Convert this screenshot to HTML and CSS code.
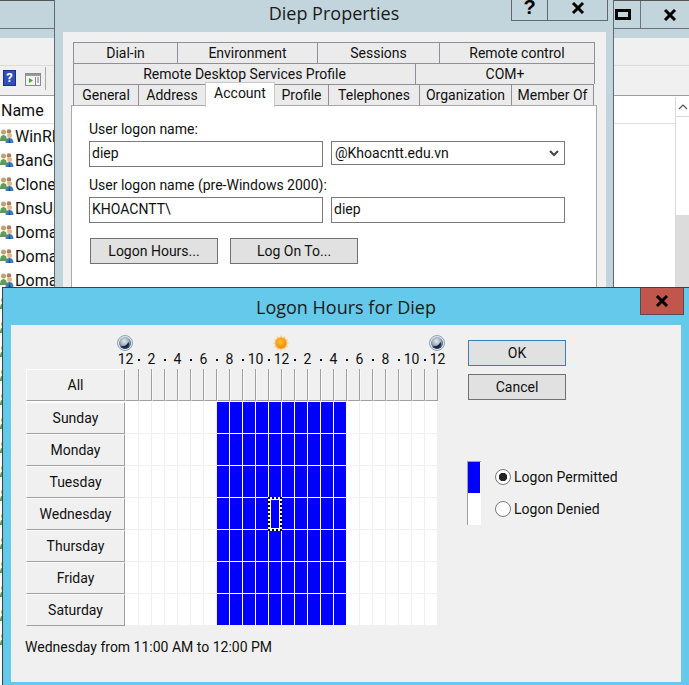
FILE: index.html
```html
<!DOCTYPE html>
<html lang="en">
<head>
    <meta charset="UTF-8">
    <title>Logon Hours for Diep</title>
    <link rel="stylesheet" href="styles.css">
</head>
<body>
    <svg class="defs" width="0" height="0">
        <defs>
            <radialGradient id="moonFill" cx="45%" cy="35%" r="70%">
                <stop offset="0" stop-color="#e8ecf0"/>
                <stop offset="0.55" stop-color="#9aa6b4"/>
                <stop offset="1" stop-color="#1f3350"/>
            </radialGradient>
            <radialGradient id="sunFill" cx="45%" cy="40%" r="60%">
                <stop offset="0" stop-color="#ffc233"/>
                <stop offset="1" stop-color="#f08a00"/>
            </radialGradient>
            <symbol id="moon" viewBox="0 0 16 16">
                <circle cx="8" cy="8" r="7.5" fill="#dfe6ee" stroke="#8fa3bd"/>
                <circle cx="8" cy="8" r="6" fill="url(#moonFill)"/>
                <path d="M3.5 11c3 1 6 0 8-4 1.500 3-.5 6.500-3.500 6.500-2 0-3.500-1-4.500-2.500z" fill="#13294a"/>
            </symbol>
            <symbol id="sun" viewBox="0 0 16 16">
                <path d="M8 0l1.500 2.500L12 1l.5 2.800L15 4.500l-1 2.500L16 8l-2 1.500 1 2.500-2.500.7L12 15l-2.500-1.300L8 16l-1.500-2.300L4 15l-.5-2.300L1 12l1-2.500L0 8l2-1 -1-2.500 2.500-.7L4 1l2.500 1.500z" fill="#f8cf90"/>
                <circle cx="8" cy="8" r="5.500" fill="url(#sunFill)"/>
            </symbol>
            <symbol id="group" viewBox="0 0 14 16">
                <circle cx="3.500" cy="4" r="2.500" fill="#c9a06a"/>
                <path d="M0 13c0-4 1-6 3.500-6S7 9 7 13z" fill="#5f9c55"/>
                <circle cx="9" cy="3.500" r="2.300" fill="#a9805a"/>
                <circle cx="9.500" cy="7.500" r="2.500" fill="#e0b98a"/>
                <path d="M5.500 15c0-3.500 1.500-5 4-5s4 1.500 4 5z" fill="#3f7fc0"/>
                <path d="M8.500 15l1-5 1 5z" fill="#1f4a80"/>
            </symbol>
            <symbol id="closeX" viewBox="0 0 14 12">
                <path d="M2 1l10 10M12 1L2 11" fill="none" stroke="#000" stroke-width="3"/>
            </symbol>
        </defs>
    </svg>

    <!-- window behind everything -->
    <div class="win back">
        <div class="back-caption">
            <div class="back-btns">
                <span class="restore-btn"><i class="restore-ico"></i></span>
                <span class="back-close"><svg class="x-ico"><use href="#closeX"/></svg></span>
            </div>
        </div>
        <div class="menu-row"></div>
        <div class="tool-row">
            <span class="help-ico">?</span>
            <svg class="view-ico" viewBox="0 0 16 13">
                <rect x="0.500" y="0.500" width="15" height="12" fill="#f4f4f4" stroke="#8a8a8a"/>
                <rect x="1" y="1" width="14" height="2" fill="#9a9a9a"/>
                <path d="M4 5l4 2.500L4 10z" fill="#3faa3a"/>
                <path d="M10.500 4v8" stroke="#8a8a8a"/>
                <path d="M12 5h2M12 7h2M12 9h2" stroke="#6a7a90"/>
            </svg>
            <span class="tool-sep"></span>
        </div>
        <div class="list-head">Name</div>
        <ul class="list" id="list">
            <li><svg class="group-ico"><use href="#group"/></svg>WinRMRemoteWMIUsers__</li>
            <li><svg class="group-ico"><use href="#group"/></svg>BanGiamHieu</li>
            <li><svg class="group-ico"><use href="#group"/></svg>Cloneable Domain Controllers</li>
            <li><svg class="group-ico"><use href="#group"/></svg>DnsUpdateProxy</li>
            <li><svg class="group-ico"><use href="#group"/></svg>Domain Admins</li>
            <li><svg class="group-ico"><use href="#group"/></svg>Domain Computers</li>
            <li><svg class="group-ico"><use href="#group"/></svg>Domain Controllers</li>
        </ul>
        <div class="scrollbar">
            <span class="scroll-up"><svg viewBox="0 0 10 6"><path d="M1 5l4-4 4 4" fill="none" stroke="#555" stroke-width="1.200"/></svg></span>
            <span class="scroll-track"></span>
            <span class="scroll-thumb"></span>
        </div>
    </div>

    <!-- properties dialog -->
    <div class="win props">
        <div class="props-title">Diep Properties</div>
        <div class="props-btns">
            <span class="props-help">?</span>
            <span class="props-close"><svg class="x-ico"><use href="#closeX"/></svg></span>
        </div>
        <div class="props-body">
            <div class="tabs">
                <div class="tab-row">
                    <span class="tab w104">Dial-in</span>
                    <span class="tab w140">Environment</span>
                    <span class="tab w122">Sessions</span>
                    <span class="tab w156">Remote control</span>
                </div>
                <div class="tab-row">
                    <span class="tab w342">Remote Desktop Services Profile</span>
                    <span class="tab w180">COM+</span>
                </div>
                <div class="tab-row">
                    <span class="tab w66">General</span>
                    <span class="tab w67">Address</span>
                    <span class="tab w69 active">Account</span>
                    <span class="tab w54">Profile</span>
                    <span class="tab w91">Telephones</span>
                    <span class="tab w92">Organization</span>
                    <span class="tab w83">Member Of</span>
                </div>
            </div>
            <div class="panel">
                <label class="f-label">User logon name:</label>
                <div class="f-row">
                    <input class="f-input" value="diep">
                    <div class="f-select">@Khoacntt.edu.vn
                        <svg class="chev" viewBox="0 0 10 7"><path d="M1 1l4 4 4-4" fill="none" stroke="#444" stroke-width="2"/></svg>
                    </div>
                </div>
                <label class="f-label second">User logon name (pre-Windows 2000):</label>
                <div class="f-row">
                    <input class="f-input" value="KHOACNTT\">
                    <input class="f-input" value="diep">
                </div>
                <div class="f-buttons">
                    <button class="btn w128">Logon Hours...</button>
                    <button class="btn w128">Log On To...</button>
                </div>
            </div>
        </div>
    </div>

    <!-- logon hours dialog -->
    <div class="win hours">
        <div class="hours-title">Logon Hours for Diep</div>
        <span class="hours-close"><svg class="x-ico"><use href="#closeX"/></svg></span>
        <div class="hours-body">
            <div class="sched">
                <div class="sky">
                    <svg class="sky-ico moon1"><use href="#moon"/></svg>
                    <svg class="sky-ico sun1"><use href="#sun"/></svg>
                    <svg class="sky-ico moon2"><use href="#moon"/></svg>
                </div>
                <div class="ruler" id="ruler"></div>
                <div class="all-row" id="allRow">
                    <span class="day-head">All</span>
                </div>
                <div class="days" id="days">
                    <div class="day-row"><span class="day-head">Sunday</span></div>
                    <div class="day-row"><span class="day-head">Monday</span></div>
                    <div class="day-row"><span class="day-head">Tuesday</span></div>
                    <div class="day-row"><span class="day-head">Wednesday</span></div>
                    <div class="day-row"><span class="day-head">Thursday</span></div>
                    <div class="day-row"><span class="day-head">Friday</span></div>
                    <div class="day-row"><span class="day-head">Saturday</span></div>
                </div>
                <div class="status">Wednesday from 11:00 AM to 12:00 PM</div>
            </div>
            <div class="side">
                <button class="btn side-btn default">OK</button>
                <button class="btn side-btn">Cancel</button>
                <div class="legend">
                    <div class="legend-bar"><i></i></div>
                    <div class="legend-opts">
                        <label class="opt"><input type="radio" name="logon" checked>Logon Permitted</label>
                        <label class="opt"><input type="radio" name="logon">Logon Denied</label>
                    </div>
                </div>
            </div>
        </div>
    </div>

    <script src="script.js"></script>
</body>
</html>
```

FILE: styles.css
```css
*{
    margin: 0;
    padding: 0;
    box-sizing: border-box;
}
html, body{
    width: 689px;
    height: 685px;
    overflow: hidden;
}
body{
    position: relative;
    background: #fff;
    font-family: Roboto, "Liberation Sans", sans-serif;
    font-size: 14px;
    color: #111;
}
ul{
    list-style: none;
}
.defs{
    position: absolute;
}
.win{
    position: absolute;
}
.x-ico{
    width: 14px;
    height: 12px;
}

/* back window */
.back{
    left: 0;
    top: 0;
    width: 689px;
    height: 685px;
    background: #fff;
}
.back-caption{
    height: 38px;
    background: #c2d5dc;
    border-top: 1px solid #555;
}
.back-btns{
    display: flex;
    justify-content: flex-end;
    height: 28px;
    border-bottom: 1px solid #6b7378;
}
.restore-btn{
    width: 26px;
    display: flex;
    align-items: center;
    padding-left: 1px;
}
.restore-ico{
    width: 16px;
    height: 11px;
    border: 3px solid #000;
}
.back-close{
    width: 49px;
    display: flex;
    align-items: center;
    justify-content: center;
    padding-left: 9px;
    border-left: 1px solid #6b7378;
}
.menu-row{
    height: 28px;
    background: #f0f0f0;
    border-bottom: 1px solid #dcdcdc;
}
.tool-row{
    height: 30px;
    background: #f0f0f0;
    border-bottom: 1px solid #a0a0a0;
    display: flex;
    align-items: flex-start;
    padding: 4px 0 0 3px;
}
.help-ico{
    width: 13px;
    height: 16px;
    background: #2f50b8;
    border: 1px solid #1d2f80;
    color: #fff;
    font-weight: bold;
    font-size: 13px;
    line-height: 14px;
    text-align: center;
}
.view-ico{
    width: 16px;
    height: 13px;
    margin-left: 9px;
    margin-top: 3px;
}
.tool-sep{
    width: 1px;
    height: 23px;
    margin-left: 4px;
    margin-top: -3px;
    background: #a8a8a8;
}
.list-head{
    height: 28px;
    padding-left: 1px;
    font-size: 16px;
    line-height: 30px;
    background: #fff;
    border-bottom: 1px solid #e2e2e2;
}
.list{
    width: 54px;
    overflow: hidden;
}
.list li{
    height: 24px;
    display: flex;
    align-items: center;
    font-size: 16px;
    white-space: nowrap;
}
.group-ico{
    width: 14px;
    height: 16px;
    margin-right: 1px;
    flex: none;
}
.scrollbar{
    position: absolute;
    left: 675px;
    top: 97px;
    width: 14px;
    height: 190px;
    display: flex;
    flex-direction: column;
    border-left: 1px solid #d9d9d9;
    background: #fff;
}
.scroll-up{
    height: 20px;
    display: flex;
    align-items: center;
    justify-content: center;
    border-bottom: 1px solid #d9d9d9;
}
.scroll-up svg{
    width: 10px;
    height: 6px;
}
.scroll-track{
    height: 98px;
}
.scroll-thumb{
    flex: 1;
    background: #dcdcdc;
}

/* properties dialog */
.props{
    left: 54px;
    top: 0;
    width: 560px;
    height: 288px;
    background: #c2d5dc;
    border-left: 1px solid #5f6a70;
    border-right: 1px solid #5f6a70;
}
.props-title{
    height: 32px;
    text-align: center;
    font-family: "Open Sans", "Noto Sans", sans-serif;
    font-size: 18px;
    line-height: 27px;
    color: #1a1a1a;
}
.props-btns{
    position: absolute;
    top: -1px;
    left: 456px;
    display: flex;
    height: 22px;
    border: 1px solid #5f6a70;
    border-top: 0;
}
.props-help, .props-close{
    display: flex;
    align-items: center;
    justify-content: center;
}
.props-help{
    width: 36px;
    padding-bottom: 4px;
    border-right: 1px solid #5f6a70;
    font-family: "Liberation Sans", sans-serif;
    font-weight: bold;
    font-size: 20px;
    color: #000;
}
.props-close{
    width: 59px;
    padding-bottom: 3px;
}
.props-body{
    margin: 0 7px 0 8px;
    height: 256px;
    background: #f0f0f0;
    padding: 10px 8px 0;
}
.tabs{
    margin-left: 2px;
}
.tab-row{
    display: flex;
    height: 21px;
}
.tab{
    height: 21px;
    background: #ebebeb;
    border: 1px solid #8f8f98;
    border-width: 1px 1px 0 1px;
    margin-right: -1px;
    text-align: center;
    line-height: 21px;
    color: #111;
}
.tab.active{
    position: relative;
    z-index: 1;
    height: 25px;
    margin-top: -2px;
    background: #fff;
    line-height: 21px;
    border-color: #c8c8c8;
}
.w66{ width: 66px; }
.w67{ width: 68px; }
.w69{ width: 70px; }
.w54{ width: 55px; }
.w91{ width: 92px; }
.w92{ width: 93px; }
.w83{ width: 83px; }
.w104{ width: 105px; }
.w122{ width: 123px; }
.w140{ width: 141px; }
.w156{ width: 156px; }
.w180{ width: 180px; }
.w342{ width: 343px; }
.panel{
    height: 182px;
    width: 526px;
    background: #fff;
    border: 1px solid #a9a9a9;
    border-bottom: 0;
    padding: 15px 17px 0;
}
.f-label{
    display: block;
    height: 20px;
    line-height: 17px;
}
.f-label.second{
    margin-top: 10px;
}
.f-row{
    display: flex;
    gap: 8px;
    align-items: flex-start;
}
.f-input{
    width: 234px;
    height: 26px;
    border: 1px solid #7a7a7a;
    padding: 0 2px 2px;
    font: inherit;
    color: #111;
    outline: none;
}
.f-select{
    width: 234px;
    height: 24px;
    border: 1px solid #7a7a7a;
    padding: 0 3px;
    line-height: 23px;
    display: flex;
    align-items: center;
    justify-content: space-between;
}
.chev{
    width: 10px;
    height: 7px;
    margin-right: 2px;
}
.f-buttons{
    display: flex;
    gap: 12px;
    margin-top: 15px;
    margin-left: 1px;
}
.btn{
    height: 26px;
    background: #e1e1e1;
    border: 1px solid #707070;
    font: inherit;
    color: #111;
}
.w128{
    width: 128px;
}

/* logon hours dialog */
.hours{
    left: 2px;
    top: 287px;
    width: 687px;
    height: 398px;
    background: #65c9eb;
    border-left: 1px solid #404040;
    border-top: 1px solid #404040;
}
.hours-title{
    height: 37px;
    text-align: center;
    font-family: "Open Sans", "Noto Sans", sans-serif;
    font-size: 18px;
    line-height: 38px;
    color: #1a1a1a;
}
.hours-close{
    position: absolute;
    left: 637px;
    top: 0;
    width: 44px;
    height: 27px;
    background: #c1564d;
    border: 1px solid #5d4a48;
    border-top: 0;
    display: flex;
    align-items: center;
    justify-content: center;
}
.hours-body{
    width: 670px;
    height: 357px;
    margin-left: 8px;
    background: #f0f0f0;
    display: flex;
    padding-left: 15px;
}
.sched{
    width: 412px;
}
.sky{
    position: relative;
    height: 26px;
}
.sky-ico{
    position: absolute;
    top: 10px;
    width: 16px;
    height: 16px;
}
.moon1{ left: 91px; }
.sun1{ left: 247px; }
.moon2{ left: 403px; }
.ruler{
    display: flex;
    height: 18px;
    margin-left: 93px;
    line-height: 17px;
}
.ruler span{
    width: 13px;
    flex: none;
    display: flex;
    justify-content: center;
    white-space: nowrap;
}
.ruler b{
    width: 2px;
    height: 2px;
    margin-top: 8px;
    background: #111;
}
.all-row, .day-row{
    display: flex;
    height: 32px;
}
.day-head{
    width: 99px;
    flex: none;
    background: #f0f0f0;
    border: 1px solid #a0a0a0;
    border-top-color: #fff;
    border-left-color: #fff;
    text-align: center;
    line-height: 30px;
}
.col-head{
    width: 13px;
    flex: none;
    background: #f0f0f0;
    border-right: 1px solid #a0a0a0;
    border-bottom: 1px solid #a0a0a0;
    border-left: 1px solid #fafafa;
}
.days{
    padding-top: 1px;
    background: linear-gradient(#fff, #fff) no-repeat 0 0 / 100% 1px;
}
.cell{
    width: 13px;
    flex: none;
    background: #fff;
    border-right: 1px solid #f0f0f0;
    border-bottom: 1px solid #f0f0f0;
}
.first{
    width: 14px;
}
.cell.on{
    background: #0000ff;
    border-color: #fff;
}
.day-row:last-child .cell{
    border-bottom-color: #f0f0f0;
}
.cell.focus{
    position: relative;
}
.cell.focus::after{
    content: "";
    position: absolute;
    left: -1px;
    top: -1px;
    right: -1px;
    bottom: -2px;
    padding: 1px;
    border: 2px dotted #000;
    background: linear-gradient(#0000ff, #0000ff) content-box, #fff border-box;
}
.status{
    margin: 12px 0 0 -1px;
    line-height: 18px;
    white-space: nowrap;
}
.side{
    margin-left: 30px;
    padding-top: 15px;
}
.side-btn{
    display: block;
    width: 98px;
    margin-bottom: 8px;
}
.default{
    border-color: #3c7fb1;
}
.legend{
    display: flex;
    margin-top: 61px;
    margin-left: -1px;
}
.legend-bar{
    width: 14px;
    height: 64px;
    background: #fff;
    border-left: 1px solid #a0a0a0;
    border-top: 1px solid #a0a0a0;
}
.legend-bar i{
    display: block;
    width: 12px;
    height: 31px;
    background: #0000ff;
}
.legend-opts{
    margin-left: 14px;
}
.opt{
    display: flex;
    align-items: center;
    height: 32px;
    gap: 3px;
}
.opt input{
    appearance: none;
    width: 16px;
    height: 16px;
    border: 1px solid #7a7a7a;
    border-radius: 50%;
    background: #fff;
}
.opt input:checked{
    background: radial-gradient(circle, #222 4px, #fff 4.500px);
}
```

FILE: script.js
```js
var oRuler = document.getElementById('ruler');
var oAll = document.getElementById('allRow');
var aRow = document.getElementById('days').children;
var oList = document.getElementById('list');
var hours = [12, 2, 4, 6, 8, 10, 12, 2, 4, 6, 8, 10, 12];

// labels on even slots, a dot between them
for (var i = 0; i < 25; i++) {
    var oSlot = document.createElement('span');
    oSlot.innerHTML = i % 2 == 0 ? hours[i / 2] : '<b></b>';
    oRuler.appendChild(oSlot);
}

for (var c = 0; c < 24; c++) {
    var oHead = document.createElement('span');
    oHead.className = c == 0 ? 'col-head first' : 'col-head';
    oAll.appendChild(oHead);
}

for (var r = 0; r < aRow.length; r++) {
    for (var k = 0; k < 24; k++) {
        var oCell = document.createElement('span');
        oCell.className = 'cell';
        if (k == 0) oCell.className += ' first';
        if (k >= 7 && k <= 16) oCell.className += ' on';
        if (r == 3 && k == 11) oCell.className += ' focus';
        aRow[r].appendChild(oCell);
    }
}

// rest of the group list only peeks out left of the dialog
for (var n = 0; n < 15; n++) {
    var oLi = document.createElement('li');
    oLi.innerHTML = '<svg class="group-ico"><use href="#group"/></svg>';
    oList.appendChild(oLi);
}
```
